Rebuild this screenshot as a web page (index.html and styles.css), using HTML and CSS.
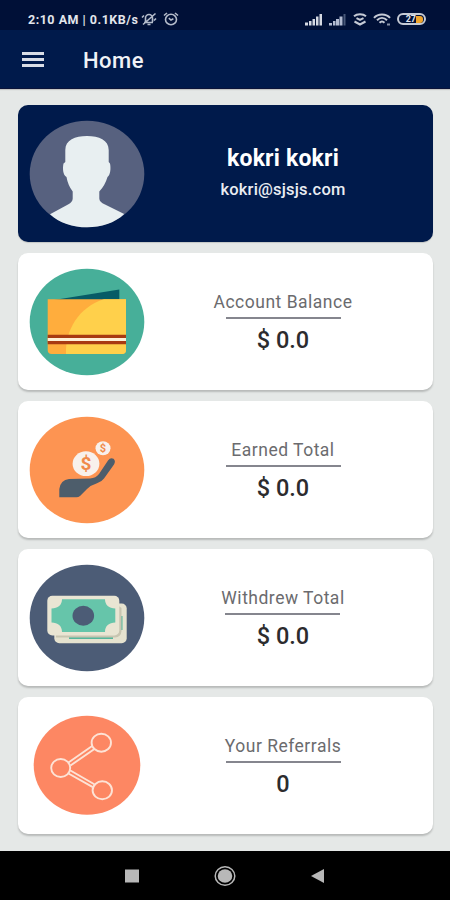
FILE: index.html
```html
<!DOCTYPE html>
<html lang="en">
<head>
    <meta charset="UTF-8">
    <meta name="viewport" content="width=device-width, initial-scale=1.0">
    <title>Home</title>
    <link rel="stylesheet" href="styles.css">
</head>
<body>
    <div class="status-bar">
        <span class="status-text">2:10 AM | 0.1KB/s</span>
        <svg class="status-mute" width="16" height="14" viewBox="0 0 16 14" fill="none" stroke="#b4bccb" stroke-width="1.6">
            <path d="M3 10.5h9M4.500 10V6a3.500 3.500 0 0 1 7 0v4M6.500 12.500h3M2 12.500 14.500 1.500M1 5.500l2-2M13 8.500l2-2"/>
        </svg>
        <svg class="status-alarm" width="16" height="14" viewBox="0 0 16 14" fill="none" stroke="#b4bccb" stroke-width="1.6">
            <ellipse cx="8" cy="7.500" rx="5.500" ry="5.200"/>
            <path d="M1 3.500 4 1M15 3.500 12 1M5.800 6.200 8 8l2.400-1.200"/>
        </svg>
        <div class="status-icons">
            <svg width="18" height="13" viewBox="0 0 18 13" fill="#d5d9e2">
                <path d="M0 9.500h3V12.500H0zM4 8h2.500v4.500H4zM7.500 6H10v6.500H7.500zM11 3.500h2.500v9H11zM14.500 1H17v11.500h-2.500z"/>
            </svg>
            <svg width="18" height="13" viewBox="0 0 18 13" fill="#b3bcd2">
                <path d="M0 10h3v2.500H0zM4 8h2.500v4.500H4zM7 6h3v6.500H7zM10.500 3.500h3v9h-3z"/>
                <path d="M14.500 1H16.500v11.500h-2z" fill="#485879"/>
            </svg>
            <svg width="14" height="13" viewBox="0 0 14 13" fill="none" stroke="#c5cad5" stroke-width="2">
                <path d="M1 3.200C4 .6 10 .6 13 3.200M3.500 5.200 7 7l3.500-1.800M1.500 8.500 7 11.500l5.500-3"/>
            </svg>
            <svg width="18" height="13" viewBox="0 0 18 13" fill="none" stroke="#c5cad5" stroke-width="2">
                <path d="M1 4.800C5 .3 13 .3 17 4.800M4 7.300c3-3 7-3 10 0M6.500 9.800c1.500-1.500 3.500-1.500 5 0"/>
                <path d="M14 11.500h3" stroke="#8993a9"/>
            </svg>
            <div class="battery"><span>27</span><i></i></div>
        </div>
    </div>

    <header class="app-bar">
        <div class="menu-btn"><span></span><span></span><span></span></div>
        <h1>Home</h1>
    </header>

    <main class="content">
        <section class="card profile-card">
            <svg class="card-icon" viewBox="0 0 116 108">
                <ellipse cx="58" cy="54" rx="57.300" ry="53.300" fill="#57617f"/>
                <path fill="#e8eff1" d="M21 94.200 39 84.500Q43.700 82 43.700 78.500V71.500Q39 65.500 37.500 57C33.800 55 33.500 48 34.500 43.500L36.300 42V30C36.300 20 46 16 58 16S79.700 20 79.700 30V42L81 43.500C82 48 81.500 55 78.500 57Q76 65.500 70.300 71.500V78.500Q70.300 82 76 84.500L95.200 94C86 103 72 107.300 58 107.300S30 103 21 94.200Z"/>
            </svg>
            <div class="card-body">
                <div class="user-name">kokri kokri</div>
                <div class="user-email">kokri@sjsjs.com</div>
            </div>
        </section>

        <section class="card">
            <svg class="card-icon" viewBox="0 0 116 108">
                <ellipse cx="58" cy="54" rx="57.300" ry="53.300" fill="#47af99"/>
                <path d="M25 32 90.300 21.500V32z" fill="#075b66"/>
                <path d="M18.700 31.300H97V82Q97 86 93 86H22.700Q18.700 86 18.700 82z" fill="#ffad3d"/>
                <path d="M75 31.300H97V82Q97 86 93 86H37C36 62 50 39 75 31.300z" fill="#ffd04b"/>
                <path d="M18.700 66.700H97V76.300H18.700z" fill="#a83a12"/>
                <path d="M18.700 70.100H97V73H18.700z" fill="#fff0d5"/>
            </svg>
            <div class="card-body">
                <div class="card-label">Account Balance</div>
                <div class="card-value">$ 0.0</div>
            </div>
        </section>

        <section class="card">
            <svg class="card-icon" viewBox="0 0 116 108">
                <ellipse cx="58" cy="54" rx="57.300" ry="53.300" fill="#fd9452"/>
                <ellipse cx="57" cy="47.700" rx="13.400" ry="12.400" fill="#f8f1ec"/>
                <ellipse cx="74" cy="32.300" rx="7.500" ry="7" fill="#f8f1ec"/>
                <text class="coin-sign" x="57" y="54" font-size="19">$</text>
                <text class="coin-sign" x="74" y="36.200" font-size="11">$</text>
                <path fill="#4d5d6b" d="M30.300 81.300V73Q31.500 64 40 63L61 62.500Q67 62 70 58L79 44.500Q81.500 41 84.500 42.800 87 45 85 48.500L75 62.500Q72.500 66 68 67.200 62 69 58 73L51 80Q49.500 81.300 47.500 81.300z"/>
            </svg>
            <div class="card-body">
                <div class="card-label">Earned Total</div>
                <div class="card-value">$ 0.0</div>
            </div>
        </section>

        <section class="card">
            <svg class="card-icon" viewBox="0 0 116 108">
                <ellipse cx="58" cy="54" rx="57.300" ry="53.300" fill="#4c5c76"/>
                <rect x="25.300" y="39.500" width="72.400" height="39.700" rx="5" fill="#e5e2cf"/>
                <path d="M88 52h5.500v14H88zM40 71.500h44v3.500H40z" fill="#55b79c"/>
                <path d="M27 73.500H86Q92 73 92.500 67V44l-4-3V70H27z" fill="#c8c5b1"/>
                <rect x="18.300" y="31.700" width="72" height="39.800" rx="5" fill="#e9e5d3"/>
                <path d="M33 35.300H76C76 41 80 44.500 86.300 44.500V58.500C80 58.500 76 62 76 68H33C33 62 29 58.500 22.500 58.500V44.500C29 44.500 33 41 33 35.300z" fill="#66c5aa"/>
                <ellipse cx="54.300" cy="51.700" rx="10.800" ry="10" fill="#4c5c76"/>
            </svg>
            <div class="card-body">
                <div class="card-label">Withdrew Total</div>
                <div class="card-value">$ 0.0</div>
            </div>
        </section>

        <section class="card">
            <svg class="card-icon" viewBox="0 0 116 108">
                <ellipse cx="58" cy="53.200" rx="53.300" ry="49.500" fill="#fd8763"/>
                <g fill="none" stroke="#fde3d6" stroke-width="1.900">
                    <path d="M39.500 50.500 63.500 33.800M41.500 53.500 65.800 36.800M41 58.300 65.300 72.300M39.500 61.500 63.800 75.200"/>
                    <g fill="#fd8763">
                        <ellipse cx="72.300" cy="30.700" rx="9.700" ry="9"/>
                        <ellipse cx="31.700" cy="56" rx="9.500" ry="9"/>
                        <ellipse cx="73.300" cy="78.300" rx="9.700" ry="9"/>
                    </g>
                </g>
            </svg>
            <div class="card-body">
                <div class="card-label">Your Referrals</div>
                <div class="card-value">0</div>
            </div>
        </section>
    </main>

    <nav class="nav-bar">
        <svg width="14" height="14" viewBox="0 0 14 14"><path d="M0 .5h14v13H0z" fill="#b8b8b8"/></svg>
        <svg width="22" height="22" viewBox="0 0 22 22">
            <ellipse cx="11" cy="11" rx="9.800" ry="9.300" fill="none" stroke="#b8b8b8" stroke-width="1.500"/>
            <ellipse cx="11" cy="11" rx="7.300" ry="6.800" fill="#b8b8b8"/>
        </svg>
        <svg width="14" height="14" viewBox="0 0 14 14"><path d="M13 0v14L0 7z" fill="#b8b8b8"/></svg>
    </nav>
</body>
</html>
```
FILE: styles.css
```css
:root {
    --primary-color: #001a4b;
    --status-color: #001037;
    --page-color: #e5e8e7;
    --border-radius: 10px;
}
* { margin: 0; padding: 0; box-sizing: border-box; font-family: Roboto, sans-serif; }
body { background-color: var(--page-color); display: flex; flex-direction: column; height: 900px; overflow: hidden; }

.status-bar { height: 30px; background-color: var(--status-color); display: flex; align-items: center; padding: 8px 24px 0 28px; color: #e3e6ec; }
.status-text { font-size: 12.5px; font-weight: 700; letter-spacing: 0.5px; width: 113px; white-space: nowrap; }
.status-alarm { margin-left: 6px; }
.status-icons { display: flex; align-items: center; gap: 6px; margin-left: auto; }
.battery { width: 29px; height: 12px; border: 2px solid #c5cad5; border-radius: 6px; display: flex; align-items: center; justify-content: flex-end; padding-right: 1px; }
.battery span { font-size: 9px; line-height: 8px; font-weight: 700; color: #e3e6ec; }
.battery i { width: 7px; height: 7px; border-radius: 0 3px 3px 0; background-color: #f0a52c; }

.app-bar { height: 59px; background-color: var(--primary-color); border-bottom: 1px solid #0a1339; display: flex; align-items: center; padding: 0 22px; box-shadow: 0 1px 1px rgba(0,0,0,0.15); }
.menu-btn { width: 22px; display: flex; flex-direction: column; gap: 3px; }
.menu-btn span { height: 3px; background-color: #d9dde6; }
h1 { color: #f0f2f6; font-size: 22px; font-weight: 500; letter-spacing: 0.5px; margin-left: 39px; padding-top: 2px; }

.content { flex: 1; padding: 16px 17px 0 18px; display: flex; flex-direction: column; gap: 11px; }
.card { height: 137px; background-color: #fff; border-radius: var(--border-radius); box-shadow: 0 2px 2px rgba(0,0,0,0.2); display: flex; align-items: flex-start; padding: 15px 12px 0 11px; }
.card-icon { width: 116px; height: 108px; flex: none; }
.coin-sign { fill: #f08a4b; font-weight: 700; text-anchor: middle; }
.card-body { flex: 1; display: flex; flex-direction: column; align-items: center; padding-top: 22px; }
.card-label { font-size: 17.5px; line-height: 24px; letter-spacing: 0.5px; color: #6b6b6e; text-align: center; white-space: nowrap; }
.card-label::after { content: ""; display: block; width: 115px; height: 2px; margin: 3px auto 0; background-color: #85868e; }
.card-value { font-size: 23.5px; line-height: 28px; font-weight: 500; color: #2c2c2e; margin-top: 7px; }

.profile-card { background-color: var(--primary-color); box-shadow: 0 1px 1px rgba(0,0,0,0.15); }
.profile-card .card-body { padding-top: 24px; }
.user-name { font-size: 23px; line-height: 30px; font-weight: 700; letter-spacing: 0.2px; color: #fff; }
.user-email { font-size: 16.5px; line-height: 22px; font-weight: 500; letter-spacing: 0.2px; color: #e9ecf2; margin-top: 5px; }

.nav-bar { height: 49px; background-color: #000; display: flex; align-items: center; padding-left: 125px; gap: 75px; }
```
